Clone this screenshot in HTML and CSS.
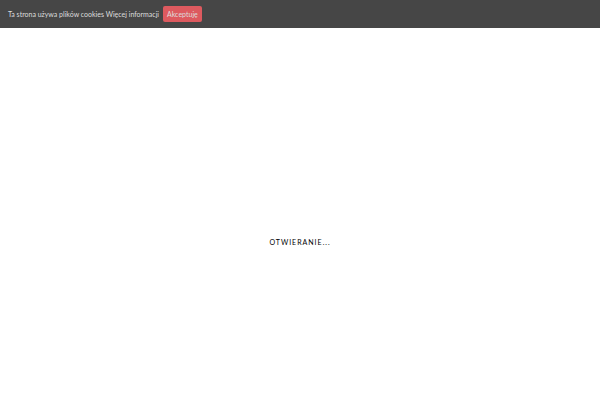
FILE: index.html
```html
<!DOCTYPE html>
<html lang="pl">

<head>
    <meta charset="utf-8">
    <meta name="viewport" content="width=device-width, initial-scale=1">
    <title>Otwieranie...</title>
    <link rel="stylesheet" href="styles.css">
</head>

<body>
    <div class="cookie-bar">
        <p class="cookie-text">Ta strona używa plików cookies <a href="#">Więcej informacji</a></p>
        <button type="button" class="cookie-accept">Akceptuję</button>
    </div>

    <main class="preloader">
        <p class="preloader-text">Otwieranie...</p>
    </main>
</body>

</html>
```
FILE: styles.css
```css
body {
    display: flex;
    flex-direction: column;
    min-height: 100vh;
    margin: 0;
    background-color: #fff;
    font-family: Lato, sans-serif;
    font-size: 7px;
    line-height: 16px;
}

.cookie-bar {
    display: flex;
    align-items: center;
    gap: 4px;
    padding: 6px 8px;
    background-color: #464646;
    color: #ddd;
}

.cookie-text {
    margin: 0;
}

.cookie-text a {
    color: inherit;
    text-decoration: none;
}

.cookie-accept {
    padding: 0 4px;
    border: 0;
    border-radius: 2px;
    background-color: #dd5a5f;
    color: #ddd;
    font: inherit;
    cursor: pointer;
}

.preloader {
    display: flex;
    flex: 1;
    align-items: center;
    justify-content: center;
    padding-top: 56px;
}

.preloader-text {
    margin: 0;
    color: #000;
    letter-spacing: 1px;
    text-transform: uppercase;
}
```
